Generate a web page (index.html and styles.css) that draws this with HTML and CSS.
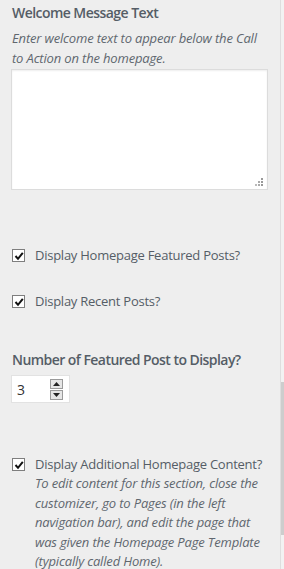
FILE: index.html
```html
<!DOCTYPE html>
<html lang="en">
<head>
  <meta charset="UTF-8">
  <title>Homepage Options</title>
  <link rel="stylesheet" href="styles.css">
</head>
<body>
  <div class="frame">
    <div class="panel">
      <div class="control">
        <span class="control-title">Welcome Message Text</span>
        <span class="description">Enter welcome text to appear below the Call to Action on the homepage.</span>
        <div class="textarea">
          <svg class="grip" width="9" height="9" viewBox="0 0 9 9">
            <rect x="6" y="0" width="2" height="2" fill="#999"/>
            <rect x="3" y="3" width="2" height="2" fill="#aaa"/>
            <rect x="6" y="3" width="2" height="2" fill="#999"/>
            <rect x="0" y="6" width="2" height="2" fill="#bbb"/>
            <rect x="3" y="6" width="2" height="2" fill="#aaa"/>
            <rect x="6" y="6" width="2" height="2" fill="#999"/>
          </svg>
        </div>
      </div>

      <label class="check-row first">
        <span class="checkbox"><svg width="10" height="10" viewBox="0 0 10 10"><path d="M1.5 5 L4 7.8 L8.8 1.8" fill="none" stroke="#111" stroke-width="2"/></svg></span>
        <span class="check-label">Display Homepage Featured Posts?</span>
      </label>

      <label class="check-row second">
        <span class="checkbox"><svg width="10" height="10" viewBox="0 0 10 10"><path d="M1.5 5 L4 7.8 L8.8 1.8" fill="none" stroke="#111" stroke-width="2"/></svg></span>
        <span class="check-label">Display Recent Posts?</span>
      </label>

      <div class="control number-control">
        <span class="control-title">Number of Featured Post to Display?</span>
        <div class="number-input">
          <span class="number-value">3</span>
          <span class="spinner">
            <span class="spin-btn"><svg width="7" height="4" viewBox="0 0 7 4"><path d="M0 4 L3.5 0 L7 4 Z" fill="#222"/></svg></span>
            <span class="spin-btn"><svg width="7" height="4" viewBox="0 0 7 4"><path d="M0 0 L3.5 4 L7 0 Z" fill="#222"/></svg></span>
          </span>
        </div>
      </div>

      <label class="check-row third">
        <span class="checkbox"><svg width="10" height="10" viewBox="0 0 10 10"><path d="M1.5 5 L4 7.8 L8.8 1.8" fill="none" stroke="#111" stroke-width="2"/></svg></span>
        <span class="check-text">
          <span class="check-label">Display Additional Homepage Content?</span>
          <span class="description">To edit content for this section, close the customizer, go to Pages (in the left navigation bar), and edit the page that was given the Homepage Page Template (typically called Home).</span>
        </span>
      </label>
    </div>

    <div class="scrollbar">
      <div class="thumb"></div>
    </div>
  </div>
</body>
</html>
```

FILE: styles.css
```css
body {
  margin: 0;
  background: #eeeeee;
  font-family: 'Open Sans', 'Noto Sans', sans-serif;
  color: #555d66;
  overflow: hidden;
}

.frame {
  display: flex;
  height: 569px;
}

.panel {
  flex: 1;
  padding: 1px 11px 0 12px;
}

.control-title {
  display: block;
  font-size: 14px;
  font-weight: 600;
  line-height: 24px;
  letter-spacing: -0.55px;
}

.description {
  display: block;
  font-size: 13px;
  font-style: italic;
  line-height: 19.5px;
  letter-spacing: -0.16px;
  color: #60676e;
}

.control .description {
  margin-top: 4px;
}

.textarea {
  position: relative;
  width: 255px;
  height: 119px;
  margin: 1px 0 0 -1px;
  background: #fff;
  border: 1px solid #dcdcdc;
  box-shadow: inset 0 1px 2px rgba(0, 0, 0, 0.07);
}

.grip {
  position: absolute;
  right: 3px;
  bottom: 2px;
}

.check-row {
  display: flex;
  align-items: flex-start;
  gap: 10px;
}

.check-row.first { margin-top: 55px; }
.check-row.second { margin-top: 26px; }
.check-row.third { margin-top: 51px; }

.checkbox {
  flex: none;
  display: flex;
  align-items: center;
  justify-content: center;
  width: 11px;
  height: 11px;
  margin-top: 4px;
  background: #fff;
  border: 1px solid #7e7e7e;
}

.check-label {
  display: block;
  font-size: 13px;
  line-height: 20px;
  letter-spacing: -0.25px;
}

.number-control {
  margin-top: 37px;
}

.number-control .control-title {
  margin-bottom: 3px;
}

.number-input {
  display: flex;
  align-items: center;
  justify-content: space-between;
  width: 57px;
  height: 26px;
  margin-left: -1px;
  background: #fff;
  border: 1px solid #e2e2e2;
}

.number-value {
  padding-left: 5px;
  font-size: 14px;
  color: #333;
}

.spinner {
  display: flex;
  flex-direction: column;
  gap: 1px;
  margin-right: 6px;
}

.spin-btn {
  display: flex;
  align-items: center;
  justify-content: center;
  width: 11px;
  height: 8px;
  background: #e6e6e6;
  border: 1px solid #9a9a9a;
}

.scrollbar {
  width: 3px;
  border-left: 1px solid #dedede;
  background: #f2f2f2;
}

.thumb {
  height: 153px;
  margin-top: 382px;
  background: #cdcdcd;
}
```
